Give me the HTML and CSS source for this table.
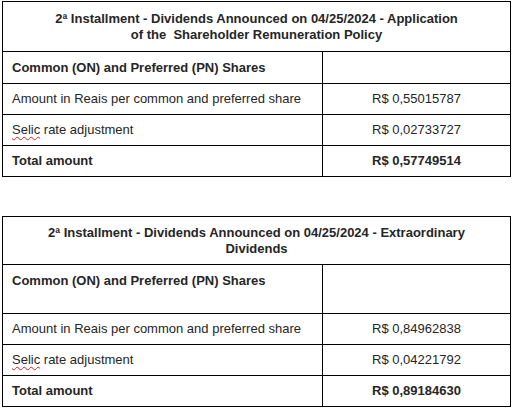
FILE: index.html
```html
<!DOCTYPE html>
<html>
<head>
<meta charset="utf-8">
<link rel="stylesheet" href="styles.css">
</head>
<body>
<div class="page">
  <table class="div-table">
    <colgroup><col class="col-label"><col class="col-value"></colgroup>
    <tr class="head-row">
      <th colspan="2" class="head">2ª Installment - Dividends Announced on 04/25/2024 - Application<br>of the&nbsp; Shareholder Remuneration Policy</th>
    </tr>
    <tr class="row first">
      <td class="label bold">Common (ON) and Preferred (PN) Shares</td>
      <td class="value"></td>
    </tr>
    <tr class="row">
      <td class="label">Amount in Reais per common and preferred share</td>
      <td class="value">R$ 0,55015787</td>
    </tr>
    <tr class="row">
      <td class="label"><span class="spell">Selic</span> rate adjustment</td>
      <td class="value">R$ 0,02733727</td>
    </tr>
    <tr class="row">
      <td class="label bold">Total amount</td>
      <td class="value bold">R$ 0,57749514</td>
    </tr>
  </table>

  <table class="div-table">
    <colgroup><col class="col-label"><col class="col-value"></colgroup>
    <tr class="head-row">
      <th colspan="2" class="head short">2ª Installment - Dividends Announced on 04/25/2024 - Extraordinary<br>Dividends</th>
    </tr>
    <tr class="row tall">
      <td class="label bold top">Common (ON) and Preferred (PN) Shares</td>
      <td class="value"></td>
    </tr>
    <tr class="row">
      <td class="label">Amount in Reais per common and preferred share</td>
      <td class="value">R$ 0,84962838</td>
    </tr>
    <tr class="row">
      <td class="label"><span class="spell">Selic</span> rate adjustment</td>
      <td class="value">R$ 0,04221792</td>
    </tr>
    <tr class="row">
      <td class="label bold">Total amount</td>
      <td class="value bold">R$ 0,89184630</td>
    </tr>
  </table>
</div>
</body>
</html>
```

FILE: styles.css
```css
html, body {
  margin: 0;
  padding: 0;
  background: #ffffff;
}

.page {
  padding: 1px 0 0 2px;
  display: flex;
  flex-direction: column;
  gap: 39px;
  font-family: "Liberation Sans", Arial, sans-serif;
  font-size: 13px;
  color: #262626;
}

.div-table {
  border-collapse: collapse;
  width: 508px;
  table-layout: fixed;
}

.col-label {
  width: 320px;
}

.col-value {
  width: 188px;
}

.div-table td,
.div-table th {
  border: 1px solid #000000;
  padding: 0 9px;
  line-height: 16px;
  vertical-align: middle;
  white-space: nowrap;
}

.head {
  height: 49px;
  text-align: center;
  font-weight: bold;
  padding-bottom: 2px;
}

.head.short {
  height: 47px;
}

.row td {
  height: 30px;
}

.row.first td {
  height: 31px;
}

.row.tall td {
  height: 40px;
}

.label {
  text-align: left;
}

.value {
  text-align: center;
}

.bold {
  font-weight: bold;
}

.top {
  vertical-align: top !important;
  padding-top: 8px !important;
}

.spell {
  text-decoration: underline wavy #d02020;
  text-decoration-thickness: 1px;
  text-underline-offset: 2px;
}
```
